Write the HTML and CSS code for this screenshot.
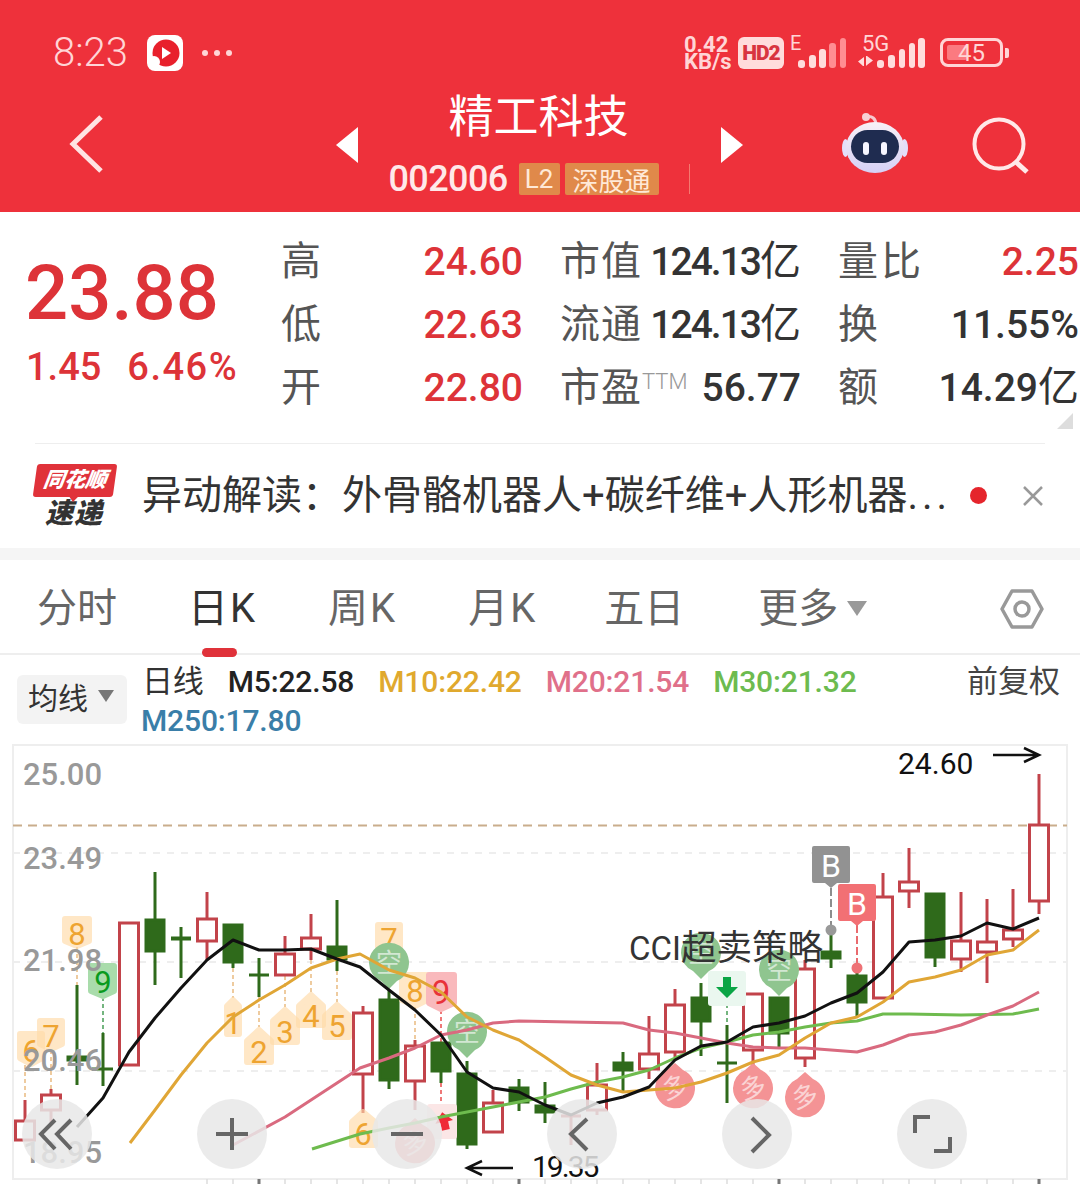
FILE: index.html
```html
<!DOCTYPE html>
<html lang="zh">
<head>
<meta charset="utf-8">
<title>精工科技</title>
<link rel="stylesheet" href="styles.css">
</head>
<body>
<div class="page">
<header class="hdr">
  <div class="status">
    <span class="time">8:23</span>
    <svg class="app-ico" width="36" height="36" viewBox="0 0 36 36"><rect width="36" height="36" rx="8" fill="#fff"/><circle cx="19" cy="18" r="13.500" fill="#e8202c"/><circle cx="7" cy="27" r="6" fill="#fff"/><path d="M15 12l9 6-9 6z" fill="#fff"/></svg>
    <span class="dots"><i></i><i></i><i></i></span>
    <span class="st-right">
      <span class="speed">0.42<br>KB/s</span>
      <span class="hd">HD2</span>
      <span class="sig"><span class="sig-t">E</span>
        <svg width="48" height="32" viewBox="0 0 48 32"><g fill="#ffdcdc"><rect x="0" y="23" width="7" height="8" rx="3"/><rect x="11" y="18" width="7" height="13" rx="3"/><rect x="21" y="12" width="7" height="19" rx="3"/></g><g fill="#ff8d92"><rect x="31" y="6" width="7" height="25" rx="3"/><rect x="42" y="1" width="6" height="30" rx="3"/></g></svg>
      </span>
      <span class="sig sig5"><span class="sig-t">5G</span>
        <svg width="68" height="32" viewBox="0 0 68 32"><g fill="#ffdcdc"><path d="M0 24.500l6-4.500v9H5zM8 19v10l1-1 6-4.500-6-4.500z"/><rect x="19" y="23" width="7" height="8" rx="3"/><rect x="30" y="18" width="7" height="13" rx="3"/><rect x="41" y="12" width="6" height="19" rx="3"/><rect x="51" y="6" width="6" height="25" rx="3"/><rect x="60" y="1" width="7" height="30" rx="3"/></g></svg>
      </span>
      <span class="batt"><span class="batt-fill"></span><span class="batt-n">45</span></span><span class="nib"></span>
    </span>
  </div>
  <div class="nav">
    <svg class="back" width="36" height="60" viewBox="0 0 36 60"><path d="M32 3L4 30l28 27" fill="none" stroke="#ffe3e3" stroke-width="5"/></svg>
    <span class="tri tri-l"></span>
    <div class="ttl">
      <div class="name">精工科技</div>
      <div class="sub"><span class="code">002006</span><span class="tag tag-l">L2</span><span class="tag tag-s">深股通</span><span class="sep"></span></div>
    </div>
    <span class="tri tri-r"></span>
    <svg class="robot" width="66" height="62" viewBox="0 0 66 62"><defs><linearGradient id="rb" x1="0" y1="0" x2="0" y2="1"><stop offset="0" stop-color="#f8f0f6"/><stop offset="1" stop-color="#d5d0f5"/></linearGradient></defs><path d="M24 4c6-2 10 2 10 8" fill="none" stroke="#f7c9d0" stroke-width="3"/><circle cx="24" cy="4" r="4" fill="#f7d0d6"/><ellipse cx="3.500" cy="35" rx="3.500" ry="9" fill="#e4defa"/><ellipse cx="62.500" cy="35" rx="3.500" ry="9" fill="#e4defa"/><ellipse cx="33" cy="34.500" rx="29" ry="25.500" fill="url(#rb)"/><rect x="9" y="17" width="48" height="33" rx="16.500" fill="#1f2c50"/><rect x="21" y="29" width="6" height="13" rx="3" fill="#f6f6ff"/><rect x="39" y="29" width="6" height="13" rx="3" fill="#f6f6ff"/></svg>
    <svg class="search" width="60" height="60" viewBox="0 0 60 60"><circle cx="27" cy="27" r="24.500" fill="none" stroke="#ffe8e8" stroke-width="4"/><path d="M44 45l11 10" stroke="#ffe8e8" stroke-width="5"/></svg>
  </div>
</header>

<section class="quote">
  <div class="q-left">
    <div class="price">23.88</div>
    <div class="chg"><span>1.45</span><span class="pct">6.46%</span></div>
  </div>
  <div class="q-grid">
    <div class="cell"><span class="lb">高</span><b class="up">24.60</b></div>
    <div class="cell"><span class="lb">市值</span><b class="narrow">124.13<span class="yi">亿</span></b></div>
    <div class="cell"><span class="lb wide">量比</span><b class="up">2.25</b></div>
    <div class="cell"><span class="lb">低</span><b class="up">22.63</b></div>
    <div class="cell"><span class="lb">流通</span><b class="narrow">124.13<span class="yi">亿</span></b></div>
    <div class="cell"><span class="lb">换</span><b>11.55%</b></div>
    <div class="cell"><span class="lb">开</span><b class="up">22.80</b></div>
    <div class="cell"><span class="lb">市盈<sup class="ttm">TTM</sup></span><b>56.77</b></div>
    <div class="cell"><span class="lb">额</span><b>14.29<span class="yi">亿</span></b></div>
  </div>
  <span class="corner"></span>
</section>

<section class="news">
  <div class="logo"><div class="logo-r"><span>同花顺</span></div><div class="logo-d">速递</div></div>
  <div class="news-t">异动解读：外骨骼机器人+碳纤维+人形机器<span class="ell">...</span></div>
  <span class="rdot"></span>
  <svg class="close" width="24" height="24" viewBox="0 0 24 24"><path d="M3 3l18 18M21 3L3 21" stroke="#999" stroke-width="2.500"/></svg>
</section>

<nav class="tabs">
  <span class="tab">分时</span>
  <span class="tab on k">日K</span>
  <span class="tab k">周K</span>
  <span class="tab k">月K</span>
  <span class="tab t5">五日</span>
  <span class="tab more">更多<i class="down"></i></span>
  <svg class="hex" width="44" height="42" viewBox="0 0 44 42"><path d="M12 3h20l10 18-10 18H12L2 21z" fill="none" stroke="#999" stroke-width="3.500" stroke-linejoin="round"/><circle cx="22" cy="21" r="7" fill="none" stroke="#999" stroke-width="3.500"/></svg>
</nav>

<div class="legend">
  <div class="ma-btn">均线<i class="down down-s"></i></div>
  <div class="ma-list">
    <span class="m-day">日线</span><span class="m5">M5:22.58</span><span class="m10">M10:22.42</span><span class="m20">M20:21.54</span><span class="m30">M30:21.32</span>
    <span class="m250">M250:17.80</span>
  </div>
  <div class="fq">前复权</div>
</div>

<svg class="chart" width="1080" height="444" viewBox="0 740 1080 444">
  <rect class="frame" x="13" y="745" width="1054" height="434"/>
  <path class="grid" d="M13 853H1067M13 962H1067M13 1071H1067"/>
  <path class="pre" d="M13 825.500H1067"/>
  <path class="tick" d="M207 1179v5M233 1179v5M285 1179v5M311 1179v5M337 1179v5M363 1179v5M389 1179v5M415 1179v5M441 1179v5M467 1179v5M493 1179v5M545 1179v5M571 1179v5M597 1179v5M623 1179v5M649 1179v5M675 1179v5M701 1179v5M727 1179v5M753 1179v5M805 1179v5M831 1179v5M857 1179v5M883 1179v5M909 1179v5M935 1179v5M961 1179v5M987 1179v5M1013 1179v5"/>
  <path class="tick-d" d="M259 1179v5M519 1179v5M779 1179v5M1039 1179v5"/>

  <g class="ylab">
    <text x="23" y="785">25.00</text>
    <text x="23" y="869">23.49</text>
  </g>

  <!-- connectors -->
  <path class="conn" d="M25 1065V1100M51 1050V1089M77 947V985M233 968V998M259 997V1027M285 976V1007M311 960V992M337 971V1002M363 1075V1110M389 953V990M415 1007V1040"/>
  <path class="conn-g" d="M103 997V1033M727 1004V1025"/>
  <path class="conn-r" d="M441 1010V1042M441 1083V1102"/>

  <!-- candles -->
  <g class="cr">
    <path d="M25 1100V1120"/><rect x="15.500" y="1121" width="19" height="19"/>
    <path d="M51 1089V1123"/><rect x="41.500" y="1095" width="19" height="15"/>
    <rect x="119.500" y="923" width="19" height="142"/>
    <path d="M207 892V960"/><rect x="197.500" y="919" width="19" height="22"/>
    <path d="M285 936V953"/><rect x="275.500" y="954" width="19" height="21"/>
    <path d="M311 914V960"/><rect x="301.500" y="938" width="19" height="11"/>
    <path d="M363 1006V1113"/><rect x="353.500" y="1013" width="19" height="61"/>
    <path d="M415 1040V1110"/><rect x="405.500" y="1046" width="19" height="35"/>
    <path d="M493 1090V1102"/><rect x="483.500" y="1103" width="19" height="29"/>
    <path d="M571 1116V1145M561 1116H581"/>
    <path d="M597 1063V1115"/><rect x="587.500" y="1085" width="19" height="25"/>
    <path d="M649 1016V1079"/><rect x="639.500" y="1054" width="19" height="15"/>
    <path d="M675 989V1057"/><rect x="665.500" y="1005" width="19" height="47"/>
    <path d="M753 993V1067"/><rect x="743.500" y="994" width="19" height="56"/>
    <path d="M805 960V1067"/><rect x="795.500" y="969" width="19" height="89"/>
    <path d="M883 873V896"/><rect x="873.500" y="897" width="19" height="101"/>
    <path d="M909 848V908"/><rect x="899.500" y="882" width="19" height="9"/>
    <path d="M961 892V972"/><rect x="951.500" y="941" width="19" height="18"/>
    <path d="M987 899V983"/><rect x="977.500" y="942" width="19" height="10"/>
    <path d="M1013 889V947"/><rect x="1003.500" y="930" width="19" height="9"/>
    <path d="M1039 774V914"/><rect x="1029.500" y="825" width="19" height="76"/>
  </g>
  <g class="cg">
    <path d="M77 985V1085"/><rect x="68" y="1057" width="18" height="3"/>
    <path d="M103 1033V1086M92 1069H113"/>
    <path d="M155 872V985"/><rect x="146" y="920" width="18" height="31"/>
    <path d="M181 927V978M171 939H191M171 938H191"/>
    <path d="M233 924V968"/><rect x="224" y="925" width="18" height="37"/>
    <path d="M259 958V997M249 975H269"/>
    <path d="M337 900V971"/><rect x="328" y="947" width="18" height="12"/>
    <path d="M389 990V1089"/><rect x="380" y="1000" width="18" height="80"/>
    <path d="M441 1042V1083"/><rect x="432" y="1043" width="18" height="28"/>
    <path d="M467 1061V1149"/><rect x="458" y="1074" width="18" height="70"/>
    <path d="M519 1079V1111"/><rect x="510" y="1088" width="18" height="14"/>
    <path d="M545 1082V1123"/><rect x="536" y="1106" width="18" height="6"/>
    <path d="M623 1052V1091"/><rect x="614" y="1063" width="18" height="7"/>
    <path d="M701 983V1056"/><rect x="692" y="998" width="18" height="23"/>
    <path d="M727 1025V1103M717 1063H737"/>
    <path d="M779 997V1047"/><rect x="770" y="998" width="18" height="35"/>
    <path d="M831 932V968"/><rect x="822" y="952" width="18" height="6"/>
    <path d="M857 965V1017"/><rect x="848" y="976" width="18" height="26"/>
    <path d="M935 893V967"/><rect x="926" y="894" width="18" height="63"/>
  </g>

  <!-- orange counters -->
  <g class="bo">
    <path d="M20 1034H42V1058L31 1064 20 1058z"/>
    <path d="M40 1021H62V1044L51 1049 40 1044z"/>
    <path d="M65 919H89V941L77 946 65 941z"/>
    <path d="M227 1006L233 1000 239 1006V1034H227z"/>
    <path d="M247 1041L259 1030 271 1041V1062H247z"/>
    <path d="M273 1021L285 1010 297 1021V1042H273z"/>
    <path d="M299 1006L311 995 323 1006V1025H299z"/>
    <path d="M325 1016L337 1005 349 1016V1037H325z"/>
    <path d="M352 1122L363 1112 375 1122V1145H352z"/>
    <path d="M378 925H400V947L389 952 378 947z"/>
    <path d="M402 975H427V1000L415 1006 402 1000z"/>
  </g>
  <path class="bg9" d="M91 966H114V991L103 996 91 991z"/>
  <path class="br9" d="M429 975H454V1003L441 1009 429 1003z"/>
  <path class="ba-g" d="M711 974H743V1003H711z"/>
  <path class="ba-r" d="M430 1107H454V1136H430z"/>
  <g class="to">
    <text x="31" y="1062">6</text><text x="51" y="1047">7</text><text x="77" y="945">8</text>
    <text x="233" y="1034">1</text><text x="259" y="1063">2</text><text x="285" y="1043">3</text><text x="311" y="1027">4</text><text x="337" y="1037">5</text>
    <text x="363" y="1145">6</text><text x="389" y="950">7</text><text x="415" y="1002">8</text>
  </g>
  <text class="tg9" x="103" y="993">9</text>
  <text class="tr9" x="441" y="1004">9</text>
  <path d="M723 977h8v10h7l-11 11-11-11h7z" class="arr-g"/>
  <path d="M444 1112L453 1122H448V1130H440V1122H435z" class="arr-r" transform="rotate(-12 444 1121)"/>

  <!-- pins -->
  <g class="pin-g">
    <path d="M369 963a20 20 0 1 1 28 18l-8 8-8-8a20 20 0 0 1-12-18z"/>
    <path d="M447 1032a20 20 0 1 1 28 18l-8 8-8-8a20 20 0 0 1-12-18z"/>
    <path d="M681 953a20 20 0 1 1 28 18l-8 8-8-8a20 20 0 0 1-12-18z"/>
    <path d="M759 970a20 20 0 1 1 28 18l-8 8-8-8a20 20 0 0 1-12-18z"/>
  </g>
  <g class="pin-r">
    <path d="M655 1088a20 20 0 0 1 12-18l8-7 8 7a20 20 0 1 1-28 18z"/>
    <path d="M733 1088a20 20 0 0 1 12-18l8-7 8 7a20 20 0 1 1-28 18z"/>
    <path d="M785 1097a20 20 0 0 1 12-18l8-7 8 7a20 20 0 1 1-28 18z"/>
    <path d="M395 1143a20 20 0 0 1 12-18l8-7 8 7a20 20 0 1 1-28 18z"/>
  </g>
  <g class="pin-t">
    <text x="389" y="972">空</text><text x="467" y="1041">空</text><text x="701" y="962">空</text><text x="779" y="979">空</text>
    <text transform="rotate(-15 675 1088)" x="675" y="1097">多</text><text transform="rotate(-15 753 1088)" x="753" y="1097">多</text><text transform="rotate(-15 805 1097)" x="805" y="1106">多</text><text transform="rotate(-15 415 1143)" x="415" y="1152">多</text>
  </g>

  <!-- B marks -->
  <path class="l-b" d="M831 888V925"/>
  <path class="l-r" d="M857 925V963"/>
  <circle class="d-b" cx="831" cy="930" r="5.500"/>
  <circle class="d-r" cx="857" cy="968" r="5.500"/>
  <path class="b-b" d="M814 846H848a2 2 0 0 1 2 2V881a2 2 0 0 1-2 2H837L831 888 825 883H814a2 2 0 0 1-2-2V848a2 2 0 0 1 2-2z"/>
  <path class="b-r" d="M840 884H874a2 2 0 0 1 2 2V919a2 2 0 0 1-2 2H863L857 926 851 921H840a2 2 0 0 1-2-2V886a2 2 0 0 1 2-2z"/>
  <text class="b-t" x="831" y="877">B</text>
  <text class="b-t" x="857" y="915">B</text>

  <!-- moving averages -->
  <polyline class="l m30l" points="312,1149 360,1134 389,1128 415,1123 441,1117 467,1112 493,1107 519,1102 545,1097 571,1089 597,1082 623,1077 649,1070 675,1058 701,1048 727,1042 753,1035 779,1032 805,1027 831,1023 857,1021 883,1014 909,1014 961,1015 1013,1014 1039,1009"/>
  <polyline class="l m20l" points="233,1145 285,1117 337,1083 360,1068 389,1058 415,1048 441,1035 467,1030 493,1023 519,1021 571,1022 623,1023 649,1030 675,1033 701,1038 727,1043 753,1047 779,1048 805,1048 831,1050 857,1052 883,1045 909,1035 935,1032 961,1025 987,1015 1013,1006 1039,992"/>
  <polyline class="l m10l" points="130,1143 155,1110 181,1075 207,1043 233,1017 259,1000 285,985 311,968 337,959 360,954 389,970 415,978 441,992 467,1017 493,1030 519,1040 545,1057 571,1075 597,1085 623,1092 649,1090 675,1088 701,1082 727,1073 753,1062 779,1055 805,1038 831,1023 857,1017 883,1002 909,982 935,977 961,970 987,955 1013,950 1039,930"/>
  <polyline class="l m5l" points="77,1127 103,1098 129,1052 155,1018 181,988 207,960 233,940 259,950 285,950 311,949 337,959 360,967 389,990 415,1010 441,1035 467,1072 493,1088 519,1092 545,1105 571,1115 597,1103 623,1097 649,1087 675,1060 701,1046 727,1042 753,1027 779,1023 805,1016 831,1003 857,993 883,972 909,942 935,940 961,936 987,923 1013,929 1039,918"/>

  <g class="ylab">
    <text x="23" y="971">21.98</text>
    <text x="23" y="1071">20.46</text>
    <text x="23" y="1163">18.95</text>
  </g>
  <text class="cci" x="629" y="960">CCI<tspan class="cci-c">超卖策略</tspan></text>
  <text class="hl" x="898" y="774">24.60</text>
  <text class="hl hl-n" x="532" y="1177">19.35</text>
  <path class="hl-a" d="M993 755H1038M1024 748L1039 755 1024 762"/>
  <path class="hl-a" d="M513 1168H468M482 1161L467 1168 482 1175"/>

  <!-- overlay buttons -->
  <g class="fab">
    <circle cx="57" cy="1134" r="35"/><circle cx="232" cy="1134" r="35"/><circle cx="407" cy="1134" r="35"/><circle cx="582" cy="1134" r="35"/><circle cx="757" cy="1134" r="35"/><circle cx="932" cy="1134" r="35"/>
  </g>
  <g class="fab-i">
    <path d="M55 1120L41 1134 55 1149M71 1120L57 1134 71 1149"/>
    <path d="M216 1134H248M232 1118V1150"/>
    <path d="M391 1134H423"/>
    <path d="M587 1119L571 1134 587 1150"/>
    <path d="M752 1118L769 1135 752 1152"/>
    <path d="M930 1117H915V1133M950 1137V1151H934"/>
  </g>
</svg>
</div>
</body>
</html>
```
FILE: styles.css
```css
* { box-sizing: border-box; }
html, body { margin: 0; padding: 0; background: #fff; }
body { font-family: Roboto, "Noto Sans CJK SC", sans-serif; }
.page { width: 1080px; height: 1184px; overflow: hidden; }

.hdr { height: 212px; background: #ee313b; color: #fff; display: flex; flex-direction: column; }
.status { height: 90px; display: flex; align-items: center; padding: 15px 71px 0 53px; color: #ffd5d6; }
.time { font-size: 40px; font-weight: 300; width: 94px; }
.app-ico { display: block; }
.dots { display: flex; gap: 6px; margin-left: 19px; }
.dots i { width: 6px; height: 6px; border-radius: 50%; background: #ffd5d6; display: block; }
.st-right { margin-left: auto; display: flex; align-items: center; }
.speed { font-size: 22px; line-height: 17px; font-weight: 700; width: 54px; }
.hd { width: 46px; height: 32px; background: #ffdcdc; color: #d8343f; border-radius: 6px; font-size: 21px; font-weight: 900; display: flex; align-items: center; justify-content: center; letter-spacing: -1px; }
.sig { position: relative; width: 48px; height: 32px; margin-left: 14px; }
.sig svg { display: block; }
.sig-t { position: absolute; font-size: 20px; left: -8px; top: -4px; line-height: 20px; }
.sig5 { width: 68px; margin-left: 12px; }
.sig5 .sig-t { left: 4px; font-size: 22px; top: -3px; }
.batt { position: relative; width: 63px; height: 29px; margin-left: 14px; border: 3px solid #ffd5d6; border-radius: 8px; display: flex; align-items: center; justify-content: center; }
.batt-fill { position: absolute; left: 4px; top: 4px; bottom: 4px; width: 20px; background: #fb7a80; border-radius: 2px; }
.batt-n { position: relative; font-size: 24px; line-height: 1; }
.nib { width: 4px; height: 10px; background: #ffd5d6; margin-left: 2px; border-radius: 0 2px 2px 0; }

.nav { flex: 1; display: flex; align-items: flex-start; padding-left: 69px; }
.back { margin-top: 24px; display: block; }
.tri { width: 0; height: 0; border-top: 18px solid transparent; border-bottom: 18px solid transparent; margin-top: 37px; }
.tri-l { border-right: 22px solid #fff; margin-left: 231px; }
.tri-r { border-left: 22px solid #fff; }
.ttl { width: 363px; padding-left: 30px; padding-right: 32px; display: flex; flex-direction: column; align-items: center; }
.name { font-size: 45px; line-height: 54px; color: #fff; margin-top: 1px; }
.sub { display: flex; align-items: center; margin-top: 18px; height: 32px; width: 304px; padding-left: 2px; }
.code { font-size: 36px; font-weight: 500; width: 130px; color: #ffe9e9; letter-spacing: -.6px; }
.tag { background: #e0894a; color: #ffe9d8; height: 32px; border-radius: 2px; font-size: 26px; display: flex; align-items: center; justify-content: center; }
.tag-l { width: 41px; }
.tag-s { width: 94px; margin-left: 5px; }
.sep { width: 1px; height: 30px; background: #f47a70; margin-left: 30px; }
.robot { margin: 23px 0 0 99px; display: block; }
.search { margin: 27px 0 0 64px; display: block; }

.quote { position: relative; height: 231px; display: flex; border-bottom: 0; padding-top: 18px; }
.q-left { width: 281px; padding-left: 25px; color: #dd3338; }
.price { font-size: 76px; line-height: 90px; font-weight: 500; margin-top: 18px; letter-spacing: 0; }
.chg { display: flex; gap: 26px; font-size: 38px; font-weight: 500; line-height: 46px; margin-top: 6px; padding-left: 1px; }
.pct { letter-spacing: 1.500px; }
.q-grid { display: grid; grid-template-columns: 242px 241px 241px; column-gap: 37px; grid-auto-rows: 63px; width: 799px; }
.cell { display: flex; justify-content: space-between; align-items: center; font-size: 40px; color: #333; }
.cell b { font-weight: 500; font-size: 39px; line-height: 46px; }
.narrow { letter-spacing: -2px; }
.yi { font-size: 41px; line-height: 0; letter-spacing: 0; font-weight: 400; }
.lb { color: #555; line-height: 1; white-space: nowrap; letter-spacing: 1px; }
.wide { letter-spacing: 3px; }
.up { color: #dd3338; }
.ttm { font-size: 22px; color: #999; vertical-align: 12px; line-height: 0; font-weight: 300; letter-spacing: 0; }
.corner { position: absolute; right: 7px; bottom: 14px; width: 0; height: 0; border-left: 16px solid transparent; border-bottom: 16px solid #ddd; }

.news { position: relative; height: 105px; margin: 0; display: flex; align-items: center; padding-left: 35px; }
.news::before { content: ""; position: absolute; left: 35px; right: 35px; top: 0; height: 1px; background: #eee; }
.logo { width: 82px; height: 66px; margin-top: 2px; }
.logo-r { height: 33px; width: 80px; background: #e0323a; border-radius: 3px; transform: skewX(-8deg); color: #fff; font-size: 21px; font-weight: 900; font-style: italic; line-height: 33px; text-align: center; position: relative; }
.logo-r::after { content: ""; position: absolute; left: 36px; bottom: -5px; border-left: 5px solid transparent; border-right: 5px solid transparent; border-top: 6px solid #e0323a; }
.logo-d { font-size: 28px; font-weight: 900; font-style: italic; color: #333; line-height: 33px; text-align: center; letter-spacing: 1px; padding-right: 4px; }
.news-t { font-size: 40px; color: #333; margin-left: 25px; width: 805px; white-space: nowrap; line-height: 1; font-weight: 400; letter-spacing: 0; }
.ell { letter-spacing: 4px; }
.rdot { width: 17px; height: 17px; border-radius: 50%; background: #e5252c; margin-left: 23px; }
.close { margin-left: 34px; }

.tabs { position: relative; border-top: 12px solid #f5f5f5; height: 107px; display: flex; align-items: center; gap: 71px; padding: 4px 36px 0 37px; border-bottom: 2px solid #eee; }
.tab { position: relative; font-size: 40px; color: #666; line-height: 1; }
.tab.k { letter-spacing: 2px; }
.tab.t5 { margin-left: -4px; }
.tab.more { margin-left: 3px; }
.tab.on { color: #333; }
.tab.on::after { content: ""; position: absolute; left: 14px; width: 35px; height: 9px; bottom: -28px; background: #e0323a; border-radius: 5px; }
.more { display: flex; align-items: center; gap: 9px; }
.down { display: block; width: 0; height: 0; border-left: 10px solid transparent; border-right: 10px solid transparent; border-top: 15px solid #999; }
.hex { margin-left: auto; display: block; }

.legend { height: 85px; display: flex; align-items: flex-start; padding: 5px 20px 0 17px; }
.ma-btn { width: 110px; height: 49px; margin-top: 15px; background: #f3f3f3; border-radius: 6px; display: flex; align-items: center; padding: 0 0 7px 11px; gap: 10px; font-size: 30px; color: #333; }
.down-s { border-left-width: 8px; border-right-width: 8px; border-top-width: 12px; border-top-color: #777; }
.ma-list { width: 760px; display: flex; flex-wrap: wrap; column-gap: 24px; font-size: 30px; line-height: 39px; font-weight: 500; padding-left: 15px; margin-top: 2px; letter-spacing: -.15px; }
.ma-list span { white-space: nowrap; }
.m-day { color: #333; font-weight: 400; font-size: 31px; }
.m5 { color: #222; }
.m10 { color: #e0a92e; }
.m20 { color: #e0708a; }
.m30 { color: #6dbb4f; }
.m250 { color: #3a7ea8; width: 100%; margin-left: -1px; }
.fq { margin-left: auto; font-size: 31px; line-height: 39px; color: #444; margin-top: 2px; }

.chart { display: block; }
.chart text { font-family: Roboto, "Noto Sans CJK SC", sans-serif; }
.frame { fill: none; stroke: #eee; stroke-width: 2; }
.grid { fill: none; stroke: #eee; stroke-width: 2; stroke-dasharray: 7 7; }
.pre { fill: none; stroke: #c9ad8c; stroke-width: 2; stroke-dasharray: 9 6; }
.tick { stroke: #ddd; stroke-width: 1.500; }
.tick-d { stroke: #777; stroke-width: 3; }
.ylab text { font-size: 31px; font-weight: 500; fill: #999; }
.conn { fill: none; stroke: #eecb9f; stroke-width: 2; stroke-dasharray: 4 3; }
.conn-g { fill: none; stroke: #74b57f; stroke-width: 2; stroke-dasharray: 4 3; }
.conn-r { fill: none; stroke: #e77; stroke-width: 2; stroke-dasharray: 4 3; }
.cr path { fill: none; stroke: #c2434a; stroke-width: 3; }
.cr rect { fill: #fff; stroke: #c2434a; stroke-width: 3; }
.cg path { fill: none; stroke: #2f6a1b; stroke-width: 3; }
.cg rect { fill: #2f6a1b; stroke: #2f6a1b; stroke-width: 3; }
.bo path { fill: #ffdba8; stroke: #ffdba8; stroke-width: 6; stroke-linejoin: round; opacity: .65; }
.bg9 { fill: #a9dcab; stroke: #a9dcab; stroke-width: 6; stroke-linejoin: round; }
.br9 { fill: #f9b9bc; stroke: #f9b9bc; stroke-width: 6; stroke-linejoin: round; }
.ba-g { fill: #eaf7ef; stroke: #eaf7ef; stroke-width: 6; stroke-linejoin: round; }
.ba-r { fill: #fbe6e6; stroke: #fbe6e6; stroke-width: 6; stroke-linejoin: round; }
.to text { font-size: 31px; fill: #eea431; text-anchor: middle; }
.tg9 { font-size: 31px; fill: #0a9a1e; text-anchor: middle; }
.tr9 { font-size: 33px; fill: #e8323a; text-anchor: middle; }
.arr-g { fill: #0aa545; }
.arr-r { fill: #ef2b36; }
.pin-g path { fill: #8fc58f; }
.pin-r path { fill: #f49395; }
.pin-t text { font-size: 26px; fill: #fff; text-anchor: middle; opacity: .6; }
.l-b { stroke: #8d8d8d; stroke-width: 2; stroke-dasharray: 8 3; }
.l-r { stroke: #e96a6e; stroke-width: 2; stroke-dasharray: 8 3; }
.d-b { fill: #999; }
.d-r { fill: #ee7276; }
.b-b { fill: #929292; }
.b-r { fill: #f27074; }
.b-t { font-size: 32px; fill: #fff; text-anchor: middle; }
.l { fill: none; stroke-width: 3; stroke-linejoin: round; }
.m5l { stroke: #111; }
.m10l { stroke: #e0a636; }
.m20l { stroke: #d96a7f; }
.m30l { stroke: #6ebb4e; }
.cci { font-size: 33px; fill: #333; }
.cci-c { font-size: 35.500px; }
.hl { font-size: 30px; fill: #111; }
.hl-n { letter-spacing: -2px; }
.hl-a { fill: none; stroke: #111; stroke-width: 2.500; }
.fab circle { fill: #e8e8e8; opacity: .85; }
.fab-i path { fill: none; stroke: #666; stroke-width: 4; }
```
